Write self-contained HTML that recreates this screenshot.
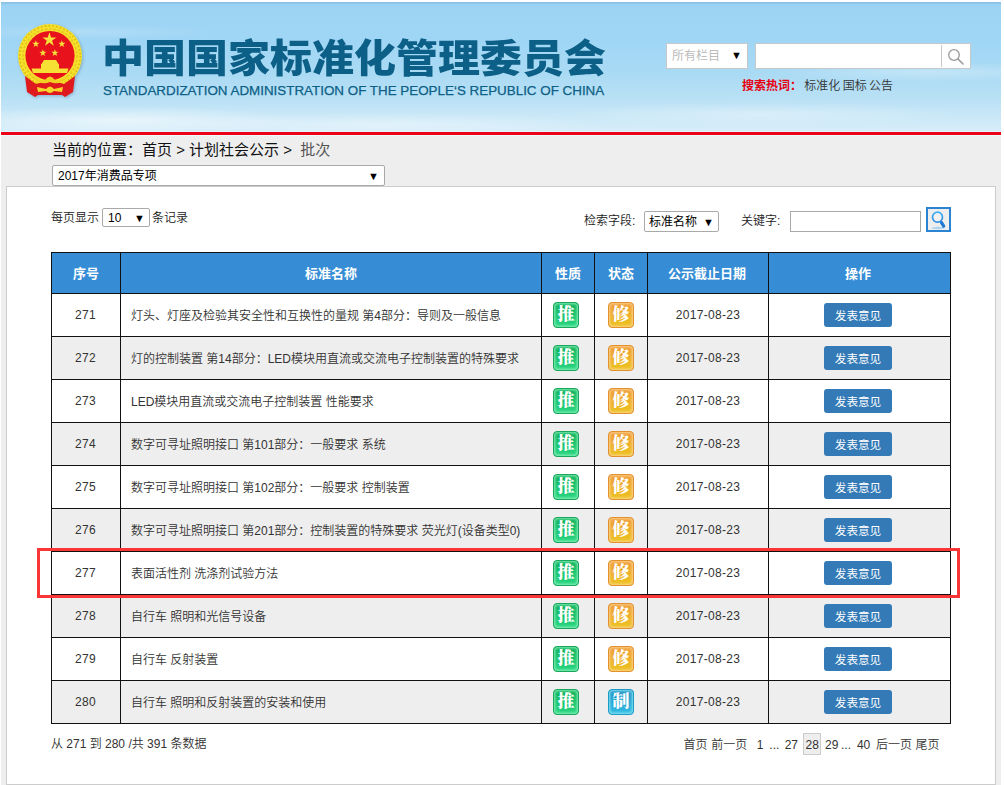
<!DOCTYPE html>
<html lang="zh-CN">
<head>
<meta charset="utf-8">
<title>中国国家标准化管理委员会</title>
<style>
*{box-sizing:border-box;margin:0;padding:0}
html,body{width:1004px;height:785px;overflow:hidden;background:#fff}
body{position:relative;font-weight:350;font-family:"Liberation Sans","Noto Sans CJK SC",sans-serif;font-size:12px;color:#333}
.abs{position:absolute}
#wrap{position:absolute;left:1px;top:2px;width:1000px;height:783px;background:#eee;overflow:hidden}
#hdr{position:absolute;left:0;top:0;width:1000px;height:130px;background:
radial-gradient(ellipse 180px 14px at 120px 118px,rgba(255,255,255,.55),rgba(255,255,255,0)),
radial-gradient(ellipse 220px 12px at 380px 122px,rgba(255,255,255,.35),rgba(255,255,255,0)),
radial-gradient(ellipse 200px 12px at 760px 112px,rgba(255,255,255,.3),rgba(255,255,255,0)),
radial-gradient(ellipse 160px 10px at 930px 70px,rgba(255,255,255,.3),rgba(255,255,255,0)),
radial-gradient(ellipse 140px 8px at 80px 30px,rgba(255,255,255,.18),rgba(255,255,255,0)),
linear-gradient(to bottom,#86bce2 0,#9cd3f4 3px,#a0d6f5 40px,#a9daf4 70px,#bae1f5 98px,#cfeaf8 120px,#d8eef9 130px)}
#redline{position:absolute;left:0;top:129px;width:1000px;height:5px;background:#ee0017;border-top:1px solid #def6fb;border-bottom:1px solid #eefbfb}
#title{position:absolute;left:101px;top:27px;font-size:42px;line-height:56px;font-weight:900;color:#0c5f86;white-space:nowrap;letter-spacing:0;transform:scaleY(.925);transform-origin:0 100%}
#sub{position:absolute;left:102px;top:81px;font-weight:400;-webkit-text-stroke:.25px #0c5f86;font-size:13.4px;line-height:16px;color:#0c5f86;white-space:nowrap}
.sel{position:absolute;font-weight:400;background:#fff;border:1px solid #a9a9a9;border-radius:2px;font-size:12px;white-space:nowrap}
.sel .arr{position:absolute;right:4px;top:0;font-size:11px;color:#000}
#panel{position:absolute;left:5px;top:184px;width:990px;height:599px;background:#fff;border:1px solid #ccc}
table{position:absolute;left:50px;top:250px;border-collapse:collapse;table-layout:fixed;width:899px}
td,th{border:1px solid #111;height:43px;font-size:12px;text-align:center;vertical-align:middle;color:#333;padding:0}
th{height:41px;background:#368dd5;color:#fff;font-weight:bold;font-size:13px;padding-bottom:2px}
td.d{letter-spacing:.32px}
td:first-child{letter-spacing:.3px;padding-right:1px}
td.l{text-align:left;padding-left:10px;padding-bottom:2px;font-weight:350}
tr.e td{background:#eee}
.ic{display:inline-block;width:26px;height:26px;border-radius:4px;color:#fff;font-weight:900;font-size:17px;line-height:24px;text-align:center;vertical-align:middle;font-family:"Liberation Serif","Noto Serif CJK SC",serif}
.g{position:relative;left:-2px;background:linear-gradient(to bottom,#0fae58,#1cc670 55%,#2cd682);border:1px solid #1aa65b;box-shadow:inset 0 0 3px 1px #8df2be}
.o{background:linear-gradient(to bottom,#ee9a35,#eeb028 55%,#ecc41e);border:1px solid #e3902f;box-shadow:inset 0 0 3px 1px #fcd596}
.b{background:linear-gradient(to bottom,#1f8fc2,#27a8d6 55%,#33bde3);border:1px solid #1f9cc4;box-shadow:inset 0 0 3px 1px #8fe6f4}
.btn{position:relative;left:-1.5px;display:inline-block;width:68.5px;height:24px;line-height:25px;background:#337ab7;border-radius:3px;color:#fff;font-size:11.6px;font-weight:400;text-align:center;vertical-align:middle}
#hl{position:absolute;left:36px;top:546px;width:923px;height:50px;border:3px solid #f93535}
</style>
</head>
<body>
<div id="wrap">
  <div id="hdr"></div>
  <div id="redline"></div>
  <div id="title">中国国家标准化管理委员会</div>
  <div id="sub">STANDARDIZATION ADMINISTRATION OF THE PEOPLE‘S REPUBLIC OF CHINA</div>

  <svg id="emblem" class="abs" style="left:12.6px;top:17.8px;overflow:visible;filter:drop-shadow(1px 1.5px 1.5px rgba(60,90,120,.35))" width="72" height="80" viewBox="0 0 72 80">
    <defs><radialGradient id="sh" cx="50%" cy="50%" r="50%"><stop offset="80%" stop-color="#000" stop-opacity=".18"/><stop offset="100%" stop-color="#000" stop-opacity="0"/></radialGradient></defs>
    <circle cx="36" cy="36" r="32" fill="#f5e02a"/>
    <circle cx="36" cy="36" r="30.2" fill="none" stroke="#d9b21a" stroke-width="1.4" stroke-dasharray="1.6 2.2"/><circle cx="36" cy="36" r="27" fill="none" stroke="#e6c422" stroke-width="1.6" stroke-dasharray="2.4 1.8"/>
    <circle cx="36" cy="35.6" r="24.6" fill="#e8121c"/>
    <path d="M11 56 L22 64 L36 60 L50 64 L61 56 L59 72 L51 77 L48 75 L24 75 L21 77 L13 72 Z" fill="#df1a1e"/>
    <g transform="translate(-0.6 1.8)">
    <polygon fill="#f7e23a" points="36,10.5 37.7,15.6 43,15.6 38.7,18.8 40.3,24 36,20.8 31.7,24 33.300000000000004,18.8 29,15.6 34.3,15.6"/>
    <polygon fill="#f7e23a" points="22.5,18.5 23.4,21 26,21 23.9,22.6 24.7,25.2 22.5,23.6 20.3,25.2 21.1,22.6 19,21 21.6,21"/>
    <polygon fill="#f7e23a" points="48.5,18.5 49.4,21 52,21 49.9,22.6 50.7,25.2 48.5,23.6 46.3,25.2 47.1,22.6 45,21 47.6,21"/>
    <polygon fill="#f7e23a" points="29.5,27.5 30.4,30 33,30 30.9,31.6 31.7,34.2 29.5,32.6 27.3,34.2 28.1,31.6 26,30 28.6,30"/>
    <polygon fill="#f7e23a" points="41.5,27.5 42.4,30 45,30 42.9,31.6 43.7,34.2 41.5,32.6 39.3,34.2 40.1,31.6 38,30 40.6,30"/>
    </g>
    <path d="M29 41.5 l1-1.5 h12 l1 1.5 l1.5 2.5 h-17 Z M27 44 h18 v4.4 h-18 Z M17.5 48.4 h37 l-1.5 4.6 h-34 Z" fill="#f6e034"/>
    <path d="M17 54 Q26 62 31 60 Q36 53 41 60 Q46 62 55 54 L53 58 Q45 66 36 62 Q27 66 19 58 Z" fill="#f0cf24"/>
    <path d="M23 67 L32 69 Q36 64 40 69 L49 67 L48 72 L40 71 Q36 75 32 71 L24 72 Z" fill="#f4d92c"/>
  </svg>

  <div class="sel" style="left:665px;top:41px;width:82px;height:26px;line-height:24px;padding-left:5px;border-radius:0;color:#bbb;border-color:#c8c8c8">所有栏目<span class="arr" style="right:5px;top:-1px">▼</span></div>
  <div class="abs" style="left:754px;top:41px;width:216px;height:26px;background:#fff;border:1px solid #c8c8c8"></div>
  <div class="abs" style="left:940px;top:43px;width:1px;height:22px;background:#c8c8c8"></div>
  <svg class="abs" style="left:946px;top:46px" width="18" height="18" viewBox="0 0 18 18"><circle cx="7" cy="7" r="5.3" fill="none" stroke="#999" stroke-width="1.3"/><path d="M11 11 L16 16" stroke="#999" stroke-width="1.6" stroke-linecap="round"/></svg>
  <div class="abs" style="left:741px;top:76px;line-height:16px;font-size:12px;white-space:nowrap;word-spacing:-1px"><b style="color:#e60012">搜索热词：</b> 标准化 国标 公告</div>

  <div class="abs" style="left:51px;top:138px;font-size:15px;font-weight:400;line-height:20px;white-space:nowrap;color:#111">当前的位置：首页 &gt; 计划社会公示 &gt;&nbsp; <span style="color:#555">批次</span></div>
  <div class="sel" style="left:51px;top:163px;width:333px;height:21px;line-height:20px;padding-left:5px;color:#000">2017年消费品专项<span class="arr" style="right:5px">▼</span></div>
  <div id="panel"></div>

  <div class="abs" style="left:50px;top:208px;line-height:16px;white-space:nowrap;color:#222">每页显示</div>
  <div class="sel" style="left:101px;top:206px;width:48px;height:19px;line-height:18px;padding-left:5px;color:#000">10<span class="arr">▼</span></div>
  <div class="abs" style="left:151px;top:208px;line-height:16px;white-space:nowrap;color:#222">条记录</div>
  <div class="abs" style="left:583px;top:211px;line-height:16px;white-space:nowrap;color:#222">检索字段:</div>
  <div class="sel" style="left:643px;top:209px;width:75px;height:21px;line-height:20px;padding-left:4px;color:#000">标准名称<span class="arr">▼</span></div>
  <div class="abs" style="left:740px;top:211px;line-height:16px;white-space:nowrap;color:#222">关键字:</div>
  <div class="abs" style="left:789px;top:209px;width:131px;height:21px;background:#fff;border:1px solid #a9a9a9"></div>
  <svg class="abs" style="left:925px;top:205px" width="25" height="25" viewBox="0 0 25 25"><defs><linearGradient id="mg" x1="0" y1="0" x2="0" y2="1"><stop offset="0" stop-color="#3fb0f6"/><stop offset="1" stop-color="#2a8be0"/></linearGradient></defs><rect x="1" y="1" width="23" height="23" fill="#eee" stroke="#2a84d2" stroke-width="2"/><ellipse cx="12" cy="21" rx="6.5" ry="1.2" fill="#9ccdf2" opacity=".8"/><circle cx="11.5" cy="10.2" r="5" fill="#f2f2f2" stroke="url(#mg)" stroke-width="1.7"/><path d="M15.5 15.6 L17.7 19.2" stroke="#1f7ad4" stroke-width="3.2" stroke-linecap="round"/></svg>
<table>
<colgroup><col style="width:69px"><col style="width:421px"><col style="width:53px"><col style="width:53px"><col style="width:121px"><col style="width:182px"></colgroup>
<tr><th>序号</th><th>标准名称</th><th>性质</th><th>状态</th><th style="padding-right:2px">公示截止日期</th><th style="padding-right:3px">操作</th></tr>
<tr><td>271</td><td class="l">灯头、灯座及检验其安全性和互换性的量规 第4部分：导则及一般信息</td><td><span class="ic g">推</span></td><td><span class="ic o">修</span></td><td class="d">2017-08-23</td><td><span class="btn">发表意见</span></td></tr>
<tr class="e"><td>272</td><td class="l">灯的控制装置 第14部分：LED模块用直流或交流电子控制装置的特殊要求</td><td><span class="ic g">推</span></td><td><span class="ic o">修</span></td><td class="d">2017-08-23</td><td><span class="btn">发表意见</span></td></tr>
<tr><td>273</td><td class="l">LED模块用直流或交流电子控制装置 性能要求</td><td><span class="ic g">推</span></td><td><span class="ic o">修</span></td><td class="d">2017-08-23</td><td><span class="btn">发表意见</span></td></tr>
<tr class="e"><td>274</td><td class="l">数字可寻址照明接口 第101部分：一般要求 系统</td><td><span class="ic g">推</span></td><td><span class="ic o">修</span></td><td class="d">2017-08-23</td><td><span class="btn">发表意见</span></td></tr>
<tr><td>275</td><td class="l">数字可寻址照明接口 第102部分：一般要求 控制装置</td><td><span class="ic g">推</span></td><td><span class="ic o">修</span></td><td class="d">2017-08-23</td><td><span class="btn">发表意见</span></td></tr>
<tr class="e"><td>276</td><td class="l">数字可寻址照明接口 第201部分：控制装置的特殊要求 荧光灯(设备类型0)</td><td><span class="ic g">推</span></td><td><span class="ic o">修</span></td><td class="d">2017-08-23</td><td><span class="btn">发表意见</span></td></tr>
<tr><td>277</td><td class="l">表面活性剂 洗涤剂试验方法</td><td><span class="ic g">推</span></td><td><span class="ic o">修</span></td><td class="d">2017-08-23</td><td><span class="btn">发表意见</span></td></tr>
<tr class="e"><td>278</td><td class="l">自行车 照明和光信号设备</td><td><span class="ic g">推</span></td><td><span class="ic o">修</span></td><td class="d">2017-08-23</td><td><span class="btn">发表意见</span></td></tr>
<tr><td>279</td><td class="l">自行车 反射装置</td><td><span class="ic g">推</span></td><td><span class="ic o">修</span></td><td class="d">2017-08-23</td><td><span class="btn">发表意见</span></td></tr>
<tr class="e"><td>280</td><td class="l">自行车 照明和反射装置的安装和使用</td><td><span class="ic g">推</span></td><td><span class="ic b">制</span></td><td class="d">2017-08-23</td><td><span class="btn">发表意见</span></td></tr>
</table>

  <div class="abs" style="left:50px;top:734px;line-height:16px;white-space:nowrap;color:#333">从 271 到 280 /共 391 条数据</div>
  <div class="abs pg" style="left:0;top:735px;width:1000px;height:16px;line-height:16px;font-size:12px;color:#333">
    <span class="abs" style="left:802px;top:-4px;width:18px;height:22px;border:1px solid #ccc;background:#eee"></span>
    <span class="abs" style="left:682.4px;top:0;white-space:nowrap">首页</span>
    <span class="abs" style="left:710.3px;top:0;white-space:nowrap">前一页</span>
    <span class="abs" style="left:755.8px;top:0;white-space:nowrap">1</span>
    <span class="abs" style="left:768.3px;top:0;white-space:nowrap">...</span>
    <span class="abs" style="left:783.7px;top:0;white-space:nowrap">27</span>
    <span class="abs" style="left:824.1px;top:0;white-space:nowrap">29</span>
    <span class="abs" style="left:840.0px;top:0;white-space:nowrap">...</span>
    <span class="abs" style="left:855.9px;top:0;white-space:nowrap">40</span>
    <span class="abs" style="left:874.9px;top:0;white-space:nowrap">后一页</span>
    <span class="abs" style="left:914.5px;top:0;white-space:nowrap">尾页</span>
    <span class="abs" style="left:804.6px;top:0">28</span>
  </div>
  <div id="hl"></div>
</div>
</body>
</html>
